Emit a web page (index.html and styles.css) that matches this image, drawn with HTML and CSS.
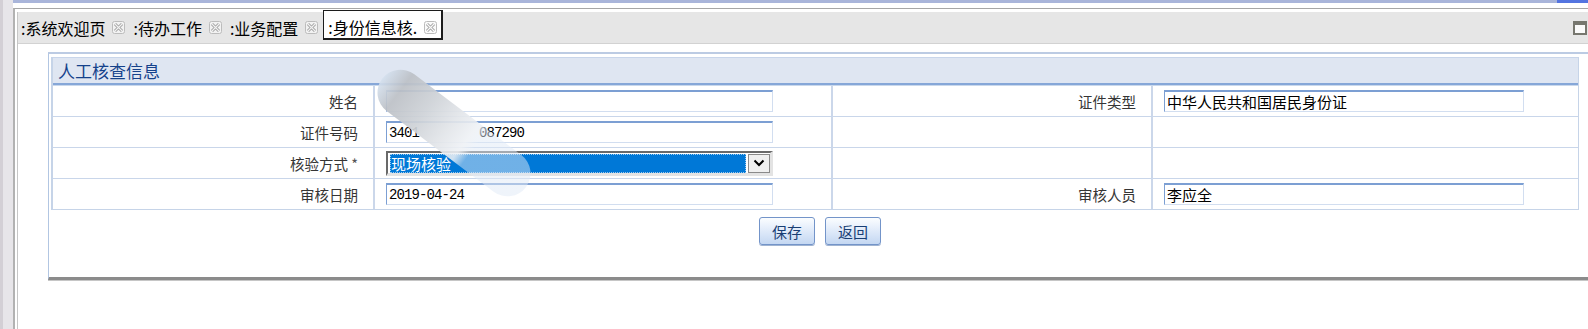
FILE: index.html
```html
<!DOCTYPE html>
<html lang="zh-CN">
<head>
    <meta charset="UTF-8">
    <meta name="viewport" content="width=device-width, initial-scale=1.0">
    <title>身份信息核查</title>
    <link rel="stylesheet" href="styles.css">
</head>
<body>
<div class="screen">
    <div class="side"></div>
    <div class="workspace">
        <div class="title-strip"></div>
        <div class="pane">
            <div class="pane-inner">
                <!-- tab strip -->
                <div class="tabbar">
                    <div class="tab">:系统欢迎页<svg class="x-icon" viewBox="0 0 13 13"><rect x="0.5" y="0.5" width="12" height="12" rx="2" fill="#f2f2f2" stroke="#bcbcbc"/><path d="M3 3L10 10M10 3L3 10" stroke="#a0a0a0" stroke-width="3"/><path d="M3 3L10 10M10 3L3 10" stroke="#f2f2f2" stroke-width="1.1"/></svg></div>
                    <div class="tab">:待办工作<svg class="x-icon" viewBox="0 0 13 13"><rect x="0.5" y="0.5" width="12" height="12" rx="2" fill="#f2f2f2" stroke="#bcbcbc"/><path d="M3 3L10 10M10 3L3 10" stroke="#a0a0a0" stroke-width="3"/><path d="M3 3L10 10M10 3L3 10" stroke="#f2f2f2" stroke-width="1.1"/></svg></div>
                    <div class="tab">:业务配置<svg class="x-icon" viewBox="0 0 13 13"><rect x="0.5" y="0.5" width="12" height="12" rx="2" fill="#f2f2f2" stroke="#bcbcbc"/><path d="M3 3L10 10M10 3L3 10" stroke="#a0a0a0" stroke-width="3"/><path d="M3 3L10 10M10 3L3 10" stroke="#f2f2f2" stroke-width="1.1"/></svg></div>
                    <div class="tab active">:身份信息核.<svg class="x-icon" viewBox="0 0 13 13"><rect x="0.5" y="0.5" width="12" height="12" rx="2" fill="#fafafa" stroke="#bcbcbc"/><path d="M3 3L10 10M10 3L3 10" stroke="#a0a0a0" stroke-width="3"/><path d="M3 3L10 10M10 3L3 10" stroke="#fafafa" stroke-width="1.1"/></svg></div>
                    <svg class="max-icon" viewBox="0 0 14 14"><rect x="1" y="1" width="12" height="12" fill="#fbfbfb" stroke="#77776f" stroke-width="2"/><rect x="1" y="1" width="12" height="3" fill="#77776f"/></svg>
                </div>

                <div class="frame">
                    <div class="panel">
                        <div class="panel-head">人工核查信息</div>
                        <table class="form-table">
                            <colgroup>
                                <col class="c1"><col class="c2"><col class="c3"><col class="c4">
                            </colgroup>
                            <tr>
                                <td class="lbl">姓名</td>
                                <td class="val"><input class="txt" type="text" value=""></td>
                                <td class="lbl">证件类型</td>
                                <td class="val"><input class="txt cjk short" type="text" value="中华人民共和国居民身份证"></td>
                            </tr>
                            <tr>
                                <td class="lbl">证件号码</td>
                                <td class="val"><input class="txt mono" type="text" value="3401        087290"></td>
                                <td class="lbl"></td>
                                <td class="val"></td>
                            </tr>
                            <tr>
                                <td class="lbl">核验方式 <span class="star">*</span></td>
                                <td class="val">
                                    <div class="pick">
                                        <div class="pick-value">现场核验</div>
                                        <div class="pick-arrow"><svg viewBox="0 0 12 8" width="12" height="8"><path d="M1.5 1.5L6 6L10.5 1.5" fill="none" stroke="#000" stroke-width="2"/></svg></div>
                                    </div>
                                </td>
                                <td class="lbl"></td>
                                <td class="val"></td>
                            </tr>
                            <tr class="last">
                                <td class="lbl">审核日期</td>
                                <td class="val"><input class="txt mono" type="text" value="2019-04-24"></td>
                                <td class="lbl">审核人员</td>
                                <td class="val"><input class="txt cjk short" type="text" value="李应全"></td>
                            </tr>
                        </table>
                    </div>
                    <div class="actions">
                        <button class="btn" type="button">保存</button>
                        <button class="btn" type="button">返回</button>
                    </div>
                    <!-- privacy smudge laid over the name / id fields -->
                    <div class="smudge"></div>
                </div>
            </div>
        </div>
    </div>
</div>
</body>
</html>
```

FILE: styles.css
```css
/* page frame */
* {
    box-sizing: border-box;
}

body {
    margin: 0;
    font-family: "Noto Sans CJK SC", sans-serif;
    background-color: #fff;
    color: #000;
    overflow: hidden;
}

.screen {
    display: flex;
    height: 100vh;
}

.side {
    width: 13px;
    background-color: #e7e5e9;
    border-left: 3px solid #d3cfd5;
}

.workspace {
    flex: 1;
    display: flex;
    flex-direction: column;
    min-width: 0;
}

.title-strip {
    height: 3px;
    margin-bottom: 5px;
    background: linear-gradient(to left, #5474e0 31px, #a9b5da 31px);
}

.pane {
    flex: 1;
    display: flex;
    border-top: 1px solid #a6a6a6;
    border-left: 2px solid #b2b2b2;
    padding: 3px 0 0 2px;
}

.pane-inner {
    flex: 1;
    min-width: 0;
    border-left: 1px solid #c6c6c6;
}

/* tabs */
.tabbar {
    display: flex;
    align-items: center;
    height: 32px;
    background-color: #e6e6e6;
    border-bottom: 1px solid #d2d2d2;
    font-size: 16px;
    line-height: 20px;
}

.tab {
    display: flex;
    align-items: center;
    padding: 0 5px 0 3px;
    white-space: nowrap;
}

.tab.active {
    align-self: flex-start;
    height: 30px;
    margin-top: -2px;
    padding: 6px 4px 1px 4px;
    background-color: #fff;
    border: 1px solid #1c1c1c;
    border-width: 1px 2px 2px 1px;
}

.x-icon {
    flex-shrink: 0;
    width: 13px;
    height: 13px;
    margin-left: 7px;
}

.max-icon {
    flex-shrink: 0;
    width: 14px;
    height: 14px;
    margin-left: auto;
    margin-right: 1px;
}

/* form panel */
.frame {
    position: relative;
    height: 228px;
    margin: 8px 0 0 30px;
    padding: 3px 9px 0 2px;
    border-top: 2px solid #bccbe3;
    border-left: 1px solid #b2c6e2;
    border-bottom: 3px solid #8b8b8b;
    box-shadow: 0 1px 0 #c6c6c6;
}

.panel {
    border: 1px solid #c6d4e8;
    border-left-width: 2px;
    border-top: none;
}

.panel-head {
    height: 28px;
    padding-left: 5px;
    border-top: 1px solid #c8d5ea;
    border-bottom: 2px solid #86a7d8;
    box-shadow: 0 1px 0 #c9d8ec;
    background-color: #dfe6f2;
    color: #15428b;
    font-size: 17px;
    line-height: 25px;
}

.form-table {
    width: 100%;
    margin-top: 1px;
    border-collapse: separate;
    border-spacing: 0;
    table-layout: fixed;
}

.c1 { width: 322px; }
.c2 { width: 458px; }
.c3 { width: 320px; }
.c4 { width: 425px; }

.form-table tr {
    height: 31px;
}

.form-table tr.last {
    height: 30px;
}

.form-table td {
    padding: 0;
    border-bottom: 1px solid #c9d6ea;
    border-right: 2px solid #cbd7ea;
    vertical-align: middle;
}

.form-table td:last-child {
    border-right: none;
}

.form-table tr.last td {
    border-bottom: none;
}

.form-table td.lbl {
    text-align: right;
    padding-right: 15px;
    font-size: 14.5px;
    color: #353535;
    white-space: nowrap;
}

.star {
    color: #555;
}

.form-table td.val {
    padding-left: 11px;
}

.txt {
    display: block;
    width: 387px;
    height: 22px;
    margin: 0;
    padding: 0 2px;
    border: 1px solid #d2def0;
    border-top: 2px solid #7c9fd3;
    border-left-color: #7c9fd3;
    background-color: #fff;
    color: #000;
    font-family: "Noto Sans CJK SC", sans-serif;
    font-size: 15px;
    outline: none;
}

.txt.short {
    width: 360px;
}

.txt.mono {
    font-family: "Liberation Mono", monospace;
    font-size: 14px;
    letter-spacing: -0.9px;
}

/* classic combo box */
.pick {
    display: flex;
    gap: 2px;
    width: 387px;
    height: 25px;
    padding: 1px 0 0 2px;
    border-style: solid;
    border-width: 2px 3px 3px 2px;
    border-color: #696969 #e3e3e3 #e3e3e3 #696969;
    background-color: #fff;
}

.pick-value {
    flex: 1;
    padding-left: 1px;
    background-color: #0078d7;
    color: #fff;
    font-size: 15px;
    line-height: 19px;
    outline: 1px dotted #9cc9ee;
    outline-offset: -1px;
}

.pick-arrow {
    display: flex;
    align-items: center;
    justify-content: center;
    width: 22px;
    background-color: #f0f0f0;
    border: 1px solid #8a8a8a;
}

/* buttons */
.actions {
    display: flex;
    justify-content: center;
    gap: 10px;
    margin-top: 7px;
    padding-left: 10px;
}

.btn {
    width: 56px;
    height: 28px;
    padding: 0;
    border: 1px solid #7394c9;
    border-radius: 3px;
    background: linear-gradient(#fbfdff, #e2ecfa 45%, #c4d7f2);
    box-shadow: 0 1px 0 #9fb3d1;
    color: #183e74;
    font-family: "Noto Sans CJK SC", sans-serif;
    font-size: 15px;
    cursor: pointer;
}

/* blurred brush stroke */
.smudge {
    position: absolute;
    left: 315px;
    top: 56px;
    width: 180px;
    height: 46px;
    border-radius: 23px;
    transform: rotate(37deg);
    background: linear-gradient(to right,
        rgba(212, 224, 238, 0.9) 0%,
        rgba(188, 192, 198, 0.92) 12%,
        rgba(206, 210, 215, 0.92) 30%,
        rgba(226, 229, 233, 0.92) 46%,
        rgba(238, 241, 245, 0.88) 58%,
        rgba(223, 233, 246, 0.5) 64%,
        rgba(223, 233, 246, 0.5) 100%);
}
```
